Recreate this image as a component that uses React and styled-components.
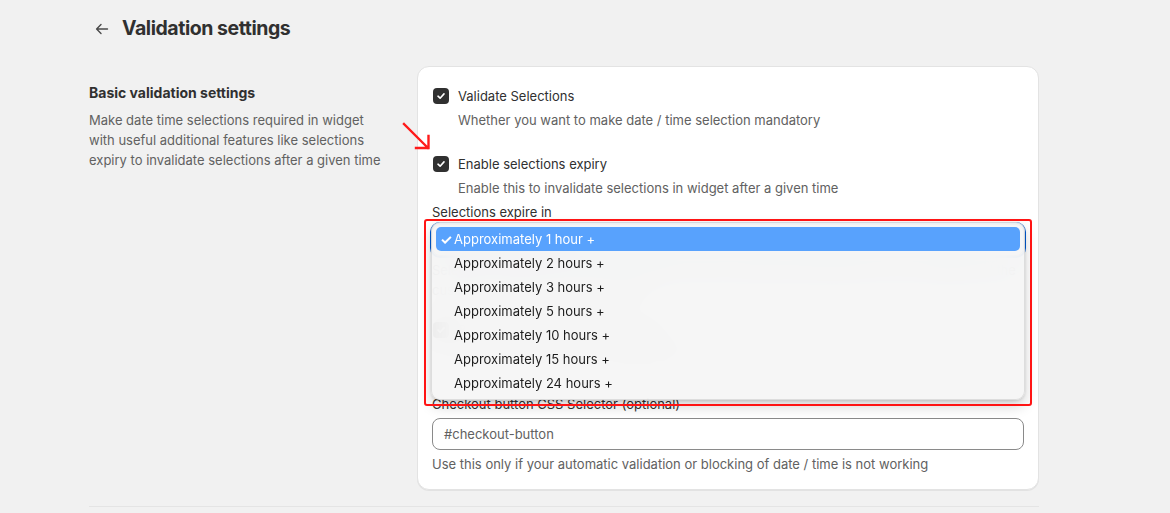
import React from "react";
import styled, { createGlobalStyle } from "styled-components";

const Global = createGlobalStyle`
  html, body { margin: 0; padding: 0; background: #f1f1f1; }
  body {
    font-family: Inter, "Noto Sans", "Liberation Sans", sans-serif;
    color: #303030;
    -webkit-font-smoothing: antialiased;
  }
`;

const Page = styled.div`
  width: 950px;
  padding: 0 0 0 89px;
  box-sizing: content-box;
`;

const Header = styled.div`
  display: flex;
  align-items: center;
  gap: 12px;
  height: 56px;
  padding-left: 5px;
`;

const BackButton = styled.button`
  display: flex;
  align-items: center;
  justify-content: center;
  width: 16px;
  height: 16px;
  padding: 0;
  border: 0;
  background: none;
  color: #4a4a4a;
  margin-top: 1px;
`;

const Title = styled.h1`
  margin: 0;
  font-size: 19.5px;
  font-weight: 700;
  letter-spacing: -0.45px;
  color: #303030;
`;

const Layout = styled.div`
  display: flex;
  gap: 32px;
  margin-top: 10px;
  padding-bottom: 16px;
  border-bottom: 1px solid #e4e4e4;
`;

const Aside = styled.div`
  width: 296px;
  flex-shrink: 0;
  padding-top: 17px;
`;

const SectionTitle = styled.h2`
  margin: 0 0 7px;
  font-size: 14px;
  line-height: 20px;
  font-weight: 650;
  color: #303030;
`;

const SectionText = styled.p`
  margin: 0;
  font-size: 13px;
  line-height: 20px;
  color: #616161;
`;

const Card = styled.div`
  flex: 1;
  background: #ffffff;
  border-radius: 12px;
  border: 1px solid #e3e3e3;
  box-shadow: 0 1px 0 rgba(0, 0, 0, 0.06);
  padding: 19px 14px 15px;
  display: flex;
  flex-direction: column;
  position: relative;
`;

const Field = styled.div`
  display: flex;
  flex-direction: column;
  margin-top: ${(p) => p.$mt || 0}px;
  position: relative;
`;

const CheckRow = styled.label`
  display: flex;
  align-items: center;
  gap: 9px;
  font-size: 13px;
  line-height: 20px;
  color: #303030;
`;

const Box = styled.span`
  width: 16px;
  height: 16px;
  border-radius: 4px;
  background: #303030;
  display: flex;
  align-items: center;
  justify-content: center;
  margin-left: 1px;
`;

const Help = styled.div`
  font-size: 13px;
  line-height: 20px;
  color: #616161;
  margin-top: ${(p) => p.$mt ?? 4}px;
  padding-left: ${(p) => (p.$indent ? 26 : 0)}px;
`;

const Label = styled.div`
  font-size: 13px;
  line-height: 16px;
  color: #303030;
  margin-bottom: ${(p) => p.$mb ?? 4}px;
`;

const SelectBox = styled.div`
  height: 32px;
  box-sizing: border-box;
  border-radius: 8px;
  border: 1px solid #8a8a8a;
  box-shadow: 0 0 0 2px #005bd3;
  display: flex;
  align-items: center;
  padding: 0 12px;
  font-size: 13px;
  position: relative;
`;

const Input = styled.div`
  height: 32px;
  box-sizing: border-box;
  border-radius: 8px;
  border: 1px solid #8a8a8a;
  display: flex;
  align-items: center;
  padding: 0 11px;
  font-size: 13px;
  color: #616161;
`;

const Menu = styled.ul`
  position: absolute;
  top: -3px;
  left: -2px;
  right: -2px;
  margin: 0;
  padding: 4px 4px;
  list-style: none;
  background: rgba(245, 245, 245, 0.93);
  backdrop-filter: blur(16px);
  -webkit-backdrop-filter: blur(16px);
  border: 1px solid rgba(0, 0, 0, 0.1);
  border-radius: 9px;
  box-shadow: 0 6px 14px rgba(0, 0, 0, 0.18), 0 1px 3px rgba(0, 0, 0, 0.12);
  z-index: 5;
`;

const Item = styled.li`
  height: 24px;
  display: flex;
  align-items: center;
  border-radius: 5px;
  font-size: 13px;
  color: ${(p) => (p.$active ? "#ffffff" : "#1d1d1d")};
  background: ${(p) => (p.$active ? "#58a2fd" : "transparent")};
  padding-left: 4px;
`;

const Tick = styled.span`
  width: 14px;
  font-size: 14px;
  font-weight: 700;
  display: inline-block;
`;

const Annotation = styled.div`
  position: absolute;
  top: -6px;
  left: -9px;
  right: -9px;
  height: 187px;
  border: 2.5px solid #ff1414;
  border-radius: 3px;
  box-sizing: border-box;
  z-index: 6;
  pointer-events: none;
`;

const ArrowMark = styled.svg`
  position: absolute;
  left: -16px;
  top: 55px;
  z-index: 6;
`;

const options = [
  "Approximately 1 hour +",
  "Approximately 2 hours +",
  "Approximately 3 hours +",
  "Approximately 5 hours +",
  "Approximately 10 hours +",
  "Approximately 15 hours +",
  "Approximately 24 hours +",
];

const CheckIcon = () => (
  <svg width="10" height="10" viewBox="0 0 10 10">
    <path d="M2 5.2 L4.1 7.2 L8 2.9" fill="none" stroke="#fff" strokeWidth="1.6" strokeLinecap="round" strokeLinejoin="round" />
  </svg>
);

export default function App() {
  return (
    <>
      <Global />
      <Page>
        <Header>
          <BackButton aria-label="Back">
            <svg width="14" height="14" viewBox="0 0 14 14">
              <path d="M12.5 7 H1.8 M6 2.6 L1.6 7 L6 11.4" fill="none" stroke="#4a4a4a" strokeWidth="1.4" strokeLinecap="round" strokeLinejoin="round" />
            </svg>
          </BackButton>
          <Title>Validation settings</Title>
        </Header>
        <Layout>
          <Aside>
            <SectionTitle>Basic validation settings</SectionTitle>
            <SectionText>
              Make date time selections required in widget with useful additional features like selections expiry to invalidate selections after a given time
            </SectionText>
          </Aside>
          <Card>
            <ArrowMark width="32" height="32" viewBox="0 0 32 32">
              <path d="M2 2 L26 26 M14 26 H26.5 V14" fill="none" stroke="#ff1a1a" strokeWidth="2.4" strokeLinecap="square" />
            </ArrowMark>
            <Field>
              <CheckRow>
                <Box><CheckIcon /></Box>
                Validate Selections
              </CheckRow>
              <Help $indent>Whether you want to make date / time selection mandatory</Help>
            </Field>
            <Field $mt={24}>
              <CheckRow>
                <Box><CheckIcon /></Box>
                Enable selections expiry
              </CheckRow>
              <Help $indent>Enable this to invalidate selections in widget after a given time</Help>
            </Field>
            <Field $mt={6}>
              <Label>Selections expire in</Label>
              <SelectBox>
                Approximately 1 hour +
                <Annotation />
                <Menu>
                  {options.map((o, i) => (
                    <Item key={o} $active={i === 0}>
                      <Tick>{i === 0 ? "✓" : ""}</Tick>
                      {o}
                    </Item>
                  ))}
                </Menu>
              </SelectBox>
              <Help>
                Selections older than the chosen duration will be cleared automatically from the widget and the customer will need to choose again
              </Help>
            </Field>
            <Field $mt={20}>
              <CheckRow>
                <Box><CheckIcon /></Box>
                Block checkout without selections
              </CheckRow>
              <Help $indent>Prevent checkout until a valid date / time is selected</Help>
            </Field>
            <Field $mt={32}>
              <Label $mb={6}>Checkout button CSS Selector (optional)</Label>
              <Input>#checkout-button</Input>
              <Help $mt={4}>Use this only if your automatic validation or blocking of date / time is not working</Help>
            </Field>
          </Card>
        </Layout>
      </Page>
    </>
  );
}
